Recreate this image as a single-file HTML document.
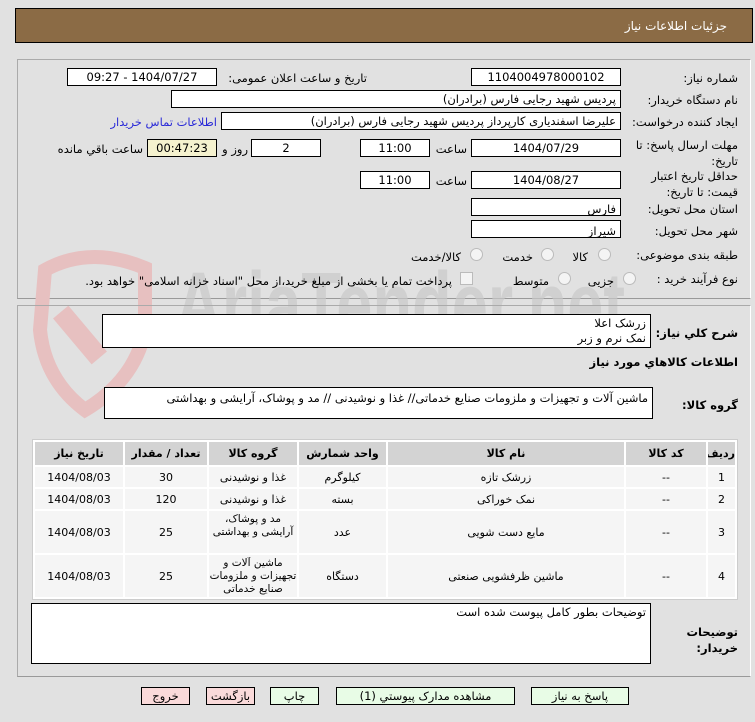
<!DOCTYPE html>
<html><head><meta charset="utf-8"><style>
body{margin:0;width:755px;height:722px;background:#e1e1e1;font-family:"DejaVu Sans","Liberation Sans",sans-serif;font-size:11.5px;color:#000;position:relative;overflow:hidden}
.a{position:absolute}
.box{position:absolute;background:#fff;border:1px solid #000;box-sizing:border-box;direction:rtl;padding:0 4px;line-height:16px;white-space:nowrap;overflow:hidden}
.c{text-align:center}
.l{position:absolute;direction:rtl;white-space:nowrap}
.rad{position:absolute;width:11px;height:11px;border-radius:50%;border:1px solid #bbb;background:#f4f4f4}
table{border-collapse:separate;border-spacing:2px;position:absolute;left:32px;top:439px;width:706px;background:#fff;border:1px solid #ccc;direction:rtl;table-layout:fixed}
td,th{text-align:center;font-size:11px;line-height:13px;padding:0;overflow:hidden}
th{background:#d3d3d3;height:23px;font-weight:bold}
td{background:#f5f5f5}
td div{overflow:hidden;font-size:10.5px;line-height:13px;letter-spacing:-0.2px}
.btn{position:absolute;top:687px;height:18px;border:1px solid #000;box-sizing:border-box;text-align:center;line-height:16px;background:#e8fce6}
.red{background:#fadada}
</style></head><body>
<div class="a" style="left:15px;top:8px;width:738px;height:35px;background:#8b6b45;border:1px solid #000;box-sizing:border-box"></div>
<div class="l" style="right:28px;top:19px;color:#fff;font-size:12px">جزئیات اطلاعات نیاز</div>

<div class="a" style="left:17px;top:59px;width:734px;height:240px;border:1px solid #aaa;border-right-color:#fff;border-bottom-color:#999;box-sizing:border-box"></div>
<!-- watermark -->
<svg class="a" style="left:15px;top:240px" width="640" height="190" viewBox="0 0 640 190">
<path d="M30 30 Q75 5 130 28 L130 90 Q120 140 70 170 Q30 140 25 90 Z" fill="none" stroke="#e7c0c0" stroke-width="14"/>
<rect x="55" y="65" width="20" height="60" fill="#e7c0c0" transform="rotate(-40 65 95)"/>
<text x="160" y="95" font-family="Liberation Sans" font-weight="bold" font-size="90" fill="#c9c9c9" opacity="0.7" textLength="450" lengthAdjust="spacingAndGlyphs">AriaTender.net</text>
</svg>

<div class="l" style="right:17px;top:71px">شماره نیاز:</div>
<div class="box c" style="left:471px;top:68px;width:150px;height:18px">1104004978000102</div>
<div class="l" style="right:388px;top:71px">تاریخ و ساعت اعلان عمومی:</div>
<div class="box c" style="left:67px;top:68px;width:150px;height:18px">1404/07/27 - 09:27</div>

<div class="l" style="right:17px;top:93px">نام دستگاه خریدار:</div>
<div class="box" style="left:171px;top:90px;width:450px;height:18px">پردیس شهید رجایی فارس (برادران)</div>

<div class="l" style="right:17px;top:115px">ایجاد کننده درخواست:</div>
<div class="box" style="left:221px;top:112px;width:400px;height:18px">علیرضا اسفندیاری کارپرداز پردیس شهید رجایی فارس (برادران)</div>
<div class="l" style="right:538px;top:115px;color:#2a2ad8">اطلاعات تماس خریدار</div>

<div class="l" style="right:17px;top:137px;line-height:16px;text-align:right">مهلت ارسال پاسخ: تا<br>تاریخ:</div>
<div class="box c" style="left:471px;top:139px;width:150px;height:18px">1404/07/29</div>
<div class="l" style="right:288px;top:142px">ساعت</div>
<div class="box c" style="left:360px;top:139px;width:70px;height:18px">11:00</div>
<div class="box c" style="left:251px;top:139px;width:70px;height:18px">2</div>
<div class="l" style="right:507px;top:142px">روز و</div>
<div class="box c" style="left:147px;top:139px;width:70px;height:18px;background:#f5f2cf">00:47:23</div>
<div class="l" style="right:612px;top:142px">ساعت باقي مانده</div>

<div class="l" style="right:17px;top:168px;line-height:16px;text-align:right">حداقل تاریخ اعتبار<br>قیمت: تا تاریخ:</div>
<div class="box c" style="left:471px;top:171px;width:150px;height:18px">1404/08/27</div>
<div class="l" style="right:288px;top:174px">ساعت</div>
<div class="box c" style="left:360px;top:171px;width:70px;height:18px">11:00</div>

<div class="l" style="right:17px;top:202px">استان محل تحویل:</div>
<div class="box" style="left:471px;top:198px;width:150px;height:18px;line-height:20px">فارس</div>
<div class="l" style="right:17px;top:224px">شهر محل تحویل:</div>
<div class="box" style="left:471px;top:220px;width:150px;height:18px;line-height:20px">شیراز</div>

<div class="l" style="right:17px;top:248px">طبقه بندی موضوعی:</div>
<div class="rad" style="left:598px;top:248px"></div><div class="l" style="right:167px;top:250px">کالا</div>
<div class="rad" style="left:541px;top:248px"></div><div class="l" style="right:222px;top:250px">خدمت</div>
<div class="rad" style="left:470px;top:248px"></div><div class="l" style="right:294px;top:250px">کالا/خدمت</div>

<div class="l" style="right:17px;top:272px">نوع فرآیند خرید :</div>
<div class="rad" style="left:623px;top:272px"></div><div class="l" style="right:141px;top:274px">جزیی</div>
<div class="rad" style="left:558px;top:272px"></div><div class="l" style="right:206px;top:274px">متوسط</div>
<div class="a" style="left:460px;top:272px;width:11px;height:11px;border:1px solid #bbb;background:#f4f4f4"></div>
<div class="l" style="right:303px;top:274px">پرداخت تمام یا بخشی از مبلغ خرید،از محل "اسناد خزانه اسلامی" خواهد بود.</div>

<div class="a" style="left:17px;top:305px;width:734px;height:372px;border:1px solid #aaa;border-right-color:#fff;border-bottom-color:#999;box-sizing:border-box"></div>
<div class="l" style="right:17px;top:326px;font-weight:bold">شرح کلي نیاز:</div>
<div class="box" style="left:102px;top:314px;width:549px;height:34px;line-height:15px;padding-top:1px">زرشک اعلا<br>نمک نرم و زبر</div>
<div class="l" style="right:17px;top:355px;font-weight:bold">اطلاعات کالاهاي مورد نیاز</div>
<div class="l" style="right:17px;top:398px;font-weight:bold">گروه کالا:</div>
<div class="box" style="left:104px;top:387px;width:549px;height:32px;line-height:15px;padding-top:3px">ماشین آلات و تجهیزات و ملزومات صنایع خدماتی// غذا و نوشیدنی // مد و پوشاک، آرایشی و بهداشتی</div>

<table>
<colgroup><col style="width:27px"><col style="width:80px"><col style="width:236px"><col style="width:87px"><col style="width:88px"><col style="width:82px"><col></colgroup>
<tr><th>ردیف</th><th>کد کالا</th><th>نام کالا</th><th>واحد شمارش</th><th>گروه کالا</th><th>تعداد / مقدار</th><th>تاریخ نیاز</th></tr>
<tr style="height:20px"><td>1</td><td>--</td><td>زرشک تازه</td><td>کیلوگرم</td><td>غذا و نوشیدنی</td><td>30</td><td>1404/08/03</td></tr>
<tr style="height:20px"><td>2</td><td>--</td><td>نمک خوراکی</td><td>بسته</td><td>غذا و نوشیدنی</td><td>120</td><td>1404/08/03</td></tr>
<tr style="height:42px"><td>3</td><td>--</td><td>مایع دست شویی</td><td>عدد</td><td><div style="height:39px">مد و پوشاک، آرایشی و بهداشتی</div></td><td>25</td><td>1404/08/03</td></tr>
<tr style="height:42px"><td>4</td><td>--</td><td>ماشین ظرفشویی صنعتی</td><td>دستگاه</td><td><div style="height:39px">ماشین آلات و تجهیزات و ملزومات صنایع خدماتی</div></td><td>25</td><td>1404/08/03</td></tr>
</table>

<div class="l" style="right:17px;top:624px;font-weight:bold;line-height:16px;text-align:right">توضیحات<br>خریدار:</div>
<div class="box" style="left:31px;top:603px;width:620px;height:61px;line-height:16px">توضیحات بطور کامل پیوست شده است</div>

<div class="btn" style="left:531px;width:98px">پاسخ به نیاز</div>
<div class="btn" style="left:336px;width:179px">مشاهده مدارک پیوستي (1)</div>
<div class="btn" style="left:270px;width:49px">چاپ</div>
<div class="btn red" style="left:206px;width:49px">بازگشت</div>
<div class="btn red" style="left:141px;width:49px">خروج</div>
</body></html>
